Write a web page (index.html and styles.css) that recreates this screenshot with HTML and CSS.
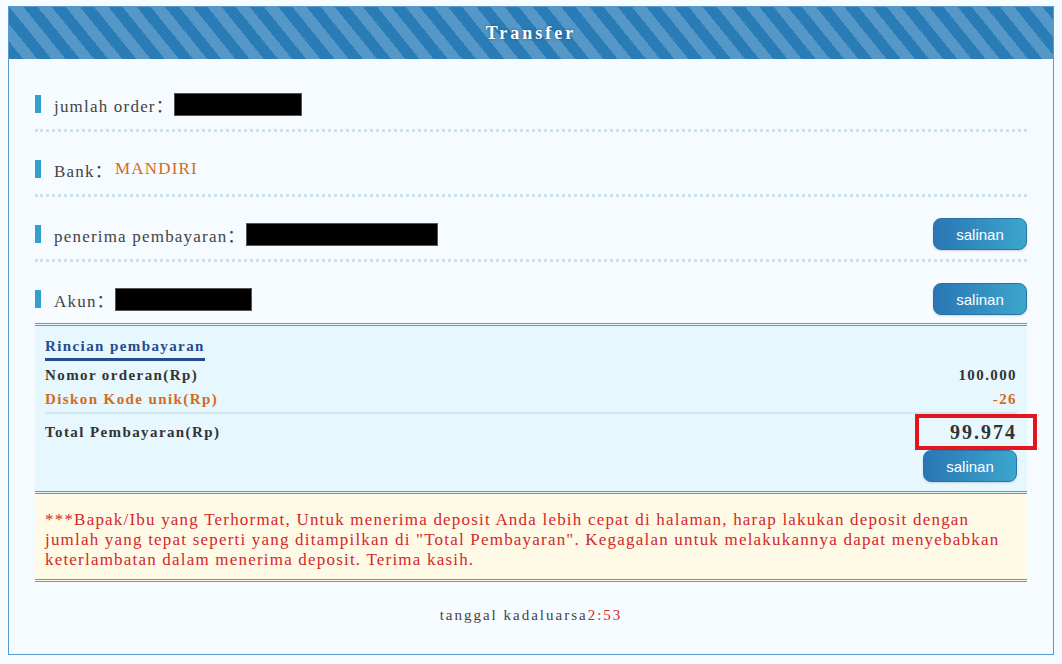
FILE: index.html
```html
<!DOCTYPE html>
<html lang="id">
<head>
    <meta charset="UTF-8">
    <meta name="viewport" content="width=device-width, initial-scale=1.0">
    <title>Transfer</title>
    <link rel="stylesheet" href="styles.css">
</head>
<body>

    <div class="transfer-box">
        <div class="transfer-title">Transfer</div>
        <div class="transfer-body">
            <div class="info-row">
                <span class="info-label">jumlah order：</span>
                <span class="masked" style="width: 128px"></span>
            </div>
            <div class="info-row">
                <span class="info-label">Bank：</span>
                <span class="bank-name">MANDIRI</span>
            </div>
            <div class="info-row">
                <span class="info-label">penerima pembayaran：</span>
                <span class="masked" style="width: 192px"></span>
                <button class="copy-btn">salinan</button>
            </div>
            <div class="info-row last">
                <span class="info-label">Akun：</span>
                <span class="masked" style="width: 137px"></span>
                <button class="copy-btn">salinan</button>
            </div>

            <div class="detail-panel">
                <div class="detail-title">Rincian pembayaran</div>
                <div class="detail-line">
                    <span>Nomor orderan(Rp)</span>
                    <span>100.000</span>
                </div>
                <div class="detail-line discount">
                    <span>Diskon Kode unik(Rp)</span>
                    <span>-26</span>
                </div>
                <div class="detail-line total">
                    <span>Total Pembayaran(Rp)</span>
                    <span class="total-amount">99.974</span>
                </div>
                <div class="detail-actions">
                    <button class="copy-btn">salinan</button>
                </div>
            </div>

            <div class="notice">
                ***Bapak/Ibu yang Terhormat, Untuk menerima deposit Anda lebih cepat di halaman, harap lakukan deposit dengan jumlah yang tepat seperti yang ditampilkan di "Total Pembayaran". Kegagalan untuk melakukannya dapat menyebabkan keterlambatan dalam menerima deposit. Terima kasih.
            </div>

            <div class="expire">tanggal kadaluarsa<span class="countdown">2:53</span></div>
        </div>
    </div>

</body>
</html>
```

FILE: styles.css
```css
:root {
    --blue-dark: #2a7cb6;
    --blue-light: #5597c7;
    --line-blue: #5a9ad0;
    --marker: #33a0cf;
    --orange: #d46a1c;
    --red-text: #d4272c;
    --text-dark: #333333;
}
body {
    font-family: 'Liberation Serif', 'Noto Sans CJK SC', serif;
    margin: 0;
    padding: 6px 8px 0;
    background-color: #f5fbfe;
    color: var(--text-dark);
}
.transfer-box {
    border: 1px solid var(--line-blue);
    background-color: #f6fbff;
}
.transfer-title {
    height: 52px;
    line-height: 52px;
    text-align: center;
    color: #fff;
    font-size: 18px;
    font-weight: bold;
    letter-spacing: 3px;
    text-shadow: 0 0 3px rgba(0,40,80,0.6);
    background: repeating-linear-gradient(51deg,
        var(--blue-dark) 0, var(--blue-dark) 11px,
        var(--blue-light) 11px, var(--blue-light) 22px);
}
.transfer-body {
    padding: 8px 26px 0;
}
.info-row {
    display: flex;
    align-items: center;
    min-height: 32px;
    padding: 21px 0 9px;
    border-bottom: 3px dotted #cbe2ec;
    font-size: 17px;
    letter-spacing: 1.2px;
}
.info-row.last {
    border-bottom: none;
    padding-bottom: 8px;
}
.info-row::before {
    content: '';
    width: 6px;
    height: 18px;
    background: var(--marker);
    margin-right: 13px;
}
.info-label {
    color: #444;
}
.bank-name {
    color: var(--orange);
    margin-left: 2px;
}
.masked {
    display: inline-block;
    height: 23px;
    background: #000;
    border: 1px solid #555;
    box-sizing: border-box;
}
.copy-btn {
    margin-left: auto;
    width: 94px;
    height: 32px;
    border: 1px solid #2a72aa;
    border-radius: 8px;
    background: linear-gradient(to right, #2a76b4, #3ba6cd);
    color: #fff;
    font-family: 'Liberation Sans', Arial, sans-serif;
    font-size: 15px;
    cursor: pointer;
    box-shadow: 0 1px 2px rgba(0,0,0,0.15);
}
.detail-panel {
    background: #e6f7fe;
    border-top: 3px double var(--line-blue);
    border-bottom: 3px double var(--line-blue);
    padding: 12px 10px 9px;
    font-weight: bold;
    font-size: 15px;
    letter-spacing: 1.4px;
}
.detail-title {
    display: inline-block;
    color: #274a8c;
    padding-bottom: 3px;
    border-bottom: 3px solid #274a8c;
    margin-bottom: 2px;
}
.detail-line {
    display: flex;
    justify-content: space-between;
    align-items: center;
    height: 24px;
}
.detail-line.discount {
    color: var(--orange);
    border-bottom: 2px solid #cde8f4;
    padding-bottom: 1px;
}
.detail-line.total {
    height: 36px;
}
.total-amount {
    font-size: 20px;
    letter-spacing: 2px;
    border: 4px solid #e5151d;
    padding: 4px 16px 4px 31px;
    margin-right: -20px;
    line-height: 20px;
}
.detail-actions {
    display: flex;
    margin-top: 0;
}
.notice {
    background: #fffae6;
    border-bottom: 3px double var(--line-blue);
    color: var(--red-text);
    font-size: 17px;
    line-height: 20px;
    letter-spacing: 1.2px;
    padding: 16px 10px 9px;
}
.expire {
    text-align: center;
    font-size: 15px;
    letter-spacing: 2px;
    color: #444;
    padding: 25px 0 30px;
}
.countdown {
    color: var(--red-text);
}
```
